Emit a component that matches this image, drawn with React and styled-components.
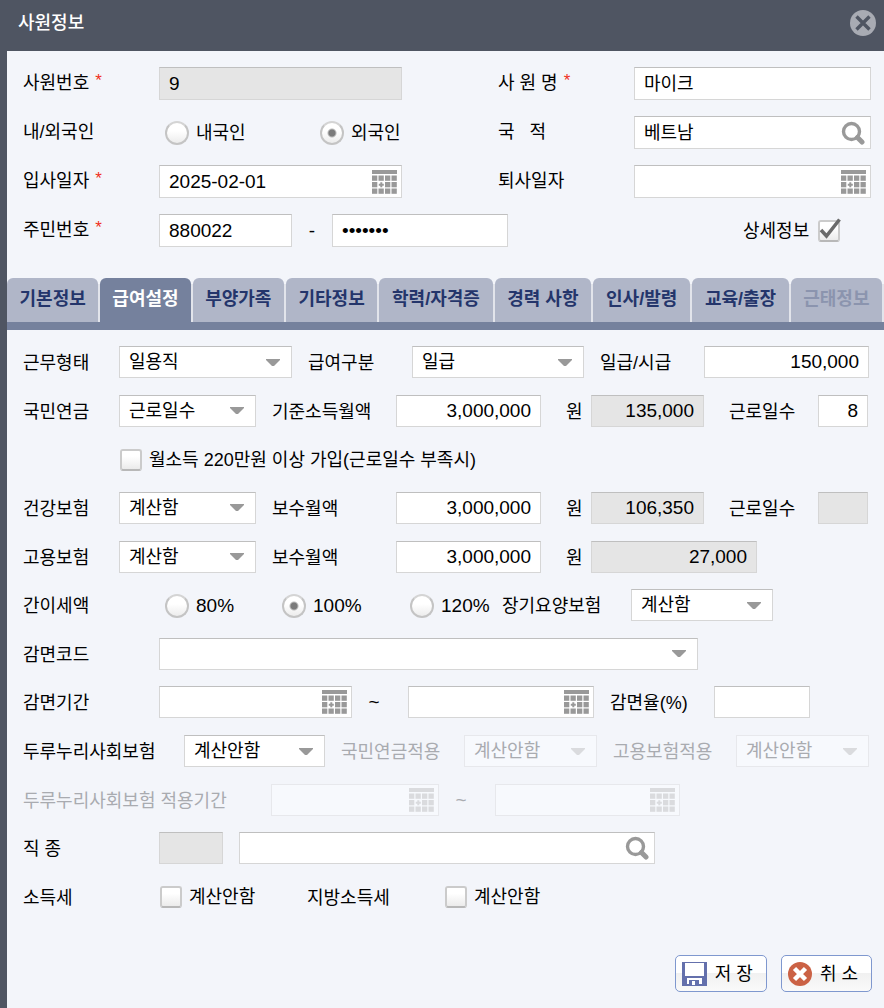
import React from "react";
import styled, { createGlobalStyle, css } from "styled-components";

const GlobalStyle = createGlobalStyle`
  * {
    box-sizing: border-box;
  }

  body {
    margin: 0;
    background: #4f5562;
    color: #000;
    font-family: "Liberation Sans", "Noto Sans CJK KR", sans-serif;
    font-size: 18px;
    line-height: 24px;
  }

  button,
  input,
  select {
    font: inherit;
    color: inherit;
    margin: 0;
  }
`;

const Window = styled.form`
  min-height: 100vh;
  display: flex;
  flex-direction: column;
  background: #4f5562;
`;

const TitleBar = styled.header`
  display: flex;
  justify-content: space-between;
  align-items: center;
  padding: 0 8px 6px 18px;
  height: 51px;
`;

const Title = styled.h1`
  margin: 0;
  color: #fff;
  font-size: 18px;
  font-weight: 500;
`;

const CloseButton = styled.button`
  display: flex;
  padding: 0;
  border: 0;
  background: none;
  cursor: pointer;
`;

const Body = styled.main`
  flex: 1;
  display: flex;
  flex-direction: column;
  margin-left: 7px;
  background: #f3f5fa;
`;

const Summary = styled.section`
  display: grid;
  grid-auto-rows: 33px;
  gap: 16px;
  padding: 16px 13px 31px 16px;
`;

const Panel = styled.section`
  flex: 1;
  display: flex;
  flex-direction: column;
  justify-content: space-between;
  padding: 16px 15px 0 16px;
`;

const Row = styled.div`
  display: grid;
  grid-template-columns: ${(p) => p.$cols};
  align-items: stretch;
  height: ${(p) => (p.$tall ? 33 : 32)}px;
`;

const Label = styled.label`
  display: flex;
  align-items: center;
  padding-left: ${(p) => p.$pad || 0}px;
  white-space: pre;
  color: ${(p) => (p.$off ? "#a9abb0" : "inherit")};

  ${Panel} & {
    padding-top: 2px;
  }

  ${Summary} & {
    padding-bottom: 1px;
  }
`;

const Required = styled.span`
  margin-left: 6px;
  padding-bottom: 4px;
  font-size: 17px;
  color: #f0301c;
`;

const Separator = styled.span`
  display: flex;
  align-items: center;
  justify-content: center;
  padding-right: ${(p) => p.$pad || 0}px;
  font-size: 19px;
  color: ${(p) => (p.$off ? "#a9abb0" : "inherit")};
`;

const box = css`
  width: 100%;
  height: 100%;
  min-width: 0;
  padding: 0 9px;
  border: 1px solid #d6d6d6;
  border-top-color: #bfbfbf;
  border-radius: 0;
  background: #fff;
  outline: none;

  &:disabled {
    background: #f7f9fd;
    border-color: #e7e8ec;
    color: #a9abb0;
    opacity: 1;
  }
`;

const Input = styled.input`
  ${box}
  padding-bottom: ${(p) => (p.$hangul ? 3 : 0)}px;
  font-size: ${(p) => (p.$hangul ? 18 : 19)}px;
  text-align: ${(p) => (p.$right ? "right" : "left")};

  &[readonly] {
    background: #e5e5e5;
  }
`;

const SelectBox = styled.select`
  ${box}
  appearance: none;
`;

const Holder = styled.div`
  position: relative;
`;

const Adornment = styled.span`
  position: absolute;
  top: 0;
  bottom: 0;
  right: ${(p) => p.$right}px;
  display: flex;
  align-items: center;
  pointer-events: none;
  opacity: ${(p) => (p.$off ? 0.3 : 1)};
`;

const IconButton = styled.button`
  display: flex;
  padding: 0;
  border: 0;
  background: none;
  pointer-events: auto;
`;

const Choices = styled.div`
  display: grid;
  grid-template-columns: 155px auto;
  padding-left: 6px;
`;

const Choice = styled.label`
  display: flex;
  align-items: center;
  gap: ${(p) => p.$gap || 7}px;
  padding-left: ${(p) => p.$pad || 0}px;
  font-size: ${(p) => (p.$latin ? 19 : 18)}px;
  white-space: nowrap;

  ${Panel} & {
    padding-top: 1px;
  }
`;

const Radio = styled.input.attrs({ type: "radio" })`
  appearance: none;
  flex: none;
  width: 24px;
  height: 24px;
  border: 2px solid #c4c4c4;
  border-top-color: #d4d4d4;
  border-radius: 50%;
  background: linear-gradient(#fff 40%, #ececec);

  &:checked {
    background: radial-gradient(circle, #7b7b7b 3px, transparent 5px),
      linear-gradient(#fff 40%, #ececec);
  }
`;

const CheckHolder = styled.span`
  position: relative;
  display: flex;
`;

const Check = styled.input.attrs({ type: "checkbox" })`
  appearance: none;
  width: 22px;
  height: 22px;
  border: 2px solid #cbcbcb;
  border-bottom-color: #b8b8b8;
  border-radius: 3px;
  background: linear-gradient(#fff 30%, #ebebeb);

  & + svg {
    position: absolute;
    left: 0;
    bottom: 0;
    pointer-events: none;
    display: none;
  }

  &:checked + svg {
    display: block;
  }
`;

const Tabs = styled.nav`
  display: grid;
  grid-template-columns: 91fr 90fr 91fr 91fr 113fr 96fr 97fr 96fr 91fr;
  gap: 2px;
  padding-right: 2px;
  border-bottom: 8px solid #75819d;
  background: linear-gradient(#f3f5fa 6px, #e2e4eb 6px);
`;

const Tab = styled.button`
  min-width: 0;
  height: 44px;
  padding: 0 0 3px;
  border: 0;
  border-radius: 6px 6px 0 0;
  background: ${(p) => (p.$active ? "#75819d" : "#b0b6c8")};
  color: ${(p) => (p.$active ? "#fff" : "#24356b")};
  font-weight: 700;
  white-space: nowrap;

  &:disabled {
    color: #8b94ae;
  }
`;

const JobName = styled.div`
  display: grid;
  padding-left: 16px;
`;

const Footer = styled.footer`
  display: flex;
  justify-content: flex-end;
  gap: 14px;
  padding: 42px 12px 16px;
`;

const ActionButton = styled.button`
  display: flex;
  align-items: center;
  gap: 8px;
  height: 37px;
  padding: 0 13px 0 6px;
  border: 1px solid #7f98cf;
  border-radius: 5px;
  background: linear-gradient(#fff 50%, #f1f1f1 50%, #fafafa);
`;

const CloseIcon = () => (
  <svg width="26" height="26" viewBox="0 0 26 26" aria-hidden="true">
    <circle cx="13" cy="13" r="13" fill="#a8abb3" />
    <path d="M6.500 6.500l13 13M19.500 6.500l-13 13" stroke="#4f5562" strokeWidth="3.400" />
  </svg>
);

const CalendarIcon = () => (
  <svg width="25" height="24" viewBox="0 0 25 24" fill="#999" aria-hidden="true">
    <rect width="25" height="4" />
    {[5.5, 12, 18.5].map((y) =>
      [0, 6.5, 13, 19.5].map((x) =>
        y === 12 && x === 6.5 ? (
          <path key={x} d="M8.300 12.300h2v1.500h1.500v2h-1.500v1.500h-2v-1.500h-1.500v-2h1.500z" />
        ) : (
          <rect key={`${x}-${y}`} x={x} y={y} width="5.300" height="5.300" />
        )
      )
    )}
  </svg>
);

const SearchIcon = () => (
  <svg width="24" height="24" viewBox="0 0 24 24" fill="none" aria-hidden="true">
    <circle cx="10.500" cy="10.500" r="8" stroke="#999" strokeWidth="3.400" />
    <path d="M16.500 16.500l4.500 4.500" stroke="#999" strokeWidth="5" strokeLinecap="round" />
  </svg>
);

const ArrowIcon = () => (
  <svg width="14" height="7" viewBox="0 0 14 7" aria-hidden="true">
    <path d="M0 0h14v1L8 7H6L0 1z" fill="#999" />
  </svg>
);

const TickIcon = () => (
  <svg width="24" height="24" viewBox="0 0 24 24" fill="none" aria-hidden="true">
    <path d="M3 12l5.500 6L21.500 1.500" stroke="#6a6a6a" strokeWidth="3.500" />
  </svg>
);

const SaveIcon = () => (
  <svg width="25" height="24" viewBox="0 0 25 24" aria-hidden="true">
    <path d="M0 0h25v24H0z" fill="#6470ac" />
    <path d="M3 1h19v13H3z" fill="#fff" />
    <path d="M5 16h15v6H5z" fill="#fff" />
    <path d="M7 18h10v4H7z" fill="#6470ac" />
    <path d="M10 19h3v4h-3z" fill="#fff" />
  </svg>
);

const CancelIcon = () => (
  <svg width="24" height="24" viewBox="0 0 24 24" aria-hidden="true">
    <circle cx="12" cy="12" r="12" fill="#cb6245" />
    <path d="M6.500 6.500l11 11M17.500 6.500l-11 11" stroke="#fff" strokeWidth="4.500" />
  </svg>
);

const Select = ({ options, ...props }) => (
  <Holder>
    <SelectBox {...props}>
      {options.map((o) => (
        <option key={o}>{o}</option>
      ))}
    </SelectBox>
    <Adornment $right={12} $off={props.disabled}>
      <ArrowIcon />
    </Adornment>
  </Holder>
);

const DateInput = (props) => (
  <Holder>
    <Input {...props} />
    <Adornment $right={5} $off={props.disabled}>
      <IconButton type="button" aria-label="달력" disabled={props.disabled}>
        <CalendarIcon />
      </IconButton>
    </Adornment>
  </Holder>
);

const SearchInput = (props) => (
  <Holder>
    <Input {...props} />
    <Adornment $right={6}>
      <IconButton type="button" aria-label="검색">
        <SearchIcon />
      </IconButton>
    </Adornment>
  </Holder>
);

const CheckBox = (props) => (
  <CheckHolder>
    <Check {...props} />
    <TickIcon />
  </CheckHolder>
);

const tabs = [
  "기본정보",
  "급여설정",
  "부양가족",
  "기타정보",
  "학력/자격증",
  "경력 사항",
  "인사/발령",
  "교육/출장",
  "근태정보",
];

const summaryCols = "136px 243fr 232px 237fr";
const insuranceCols = "96px 137fr 140px 145fr 50px 113fr 114px 50fr 1px";

const calc = ["계산함", "계산안함"];
const noCalc = ["계산안함", "계산함"];

export default function App() {
  return (
    <>
      <GlobalStyle />
      <Window onSubmit={(e) => e.preventDefault()}>
        <TitleBar>
          <Title>사원정보</Title>
          <CloseButton type="button" aria-label="닫기">
            <CloseIcon />
          </CloseButton>
        </TitleBar>

        <Body>
          <Summary>
            <Row $tall $cols={summaryCols}>
              <Label htmlFor="empNo">
                사원번호<Required>*</Required>
              </Label>
              <Input id="empNo" defaultValue="9" readOnly />
              <Label htmlFor="empName" $pad={96}>
                사 원 명<Required>*</Required>
              </Label>
              <Input id="empName" $hangul defaultValue="마이크" />
            </Row>
            <Row $tall $cols={summaryCols}>
              <Label as="span">내/외국인</Label>
              <Choices>
                <Choice>
                  <Radio name="origin" />
                  내국인
                </Choice>
                <Choice>
                  <Radio name="origin" defaultChecked />
                  외국인
                </Choice>
              </Choices>
              <Label htmlFor="nation" $pad={96}>
                {"국   적"}
              </Label>
              <SearchInput id="nation" $hangul defaultValue="베트남" />
            </Row>
            <Row $tall $cols={summaryCols}>
              <Label htmlFor="joined">
                입사일자<Required>*</Required>
              </Label>
              <DateInput id="joined" defaultValue="2025-02-01" />
              <Label htmlFor="left" $pad={96}>
                퇴사일자
              </Label>
              <DateInput id="left" />
            </Row>
            <Row $tall $cols="136px 133fr 40px 176fr 363px">
              <Label htmlFor="rrn1">
                주민번호<Required>*</Required>
              </Label>
              <Input id="rrn1" defaultValue="880022" />
              <Separator>-</Separator>
              <Input id="rrn2" type="password" aria-label="주민번호 뒷자리" defaultValue="1234567" />
              <Choice $pad={235} $gap={9}>
                상세정보
                <CheckBox defaultChecked />
              </Choice>
            </Row>
          </Summary>

          <Tabs>
            {tabs.map((name, i) => (
              <Tab key={name} type="button" $active={i === 1} disabled={i === 8}>
                {name}
              </Tab>
            ))}
          </Tabs>

          <Panel>
            <Row $cols="96px 173fr 120px 172fr 120px 165fr">
              <Label htmlFor="workType">근무형태</Label>
              <Select id="workType" options={["일용직", "상용직"]} />
              <Label htmlFor="payType" $pad={16}>
                급여구분
              </Label>
              <Select id="payType" options={["일급", "시급"]} />
              <Label htmlFor="wage" $pad={16}>
                일급/시급
              </Label>
              <Input id="wage" $right defaultValue="150,000" />
            </Row>
            <Row $cols={insuranceCols}>
              <Label htmlFor="pension">국민연금</Label>
              <Select id="pension" options={["근로일수", "계산안함"]} />
              <Label htmlFor="pensionBase" $pad={16}>
                기준소득월액
              </Label>
              <Input id="pensionBase" $right defaultValue="3,000,000" />
              <Label htmlFor="pensionFee" $pad={25}>
                원
              </Label>
              <Input id="pensionFee" $right readOnly defaultValue="135,000" />
              <Label htmlFor="pensionDays" $pad={25}>
                근로일수
              </Label>
              <Input id="pensionDays" $right defaultValue="8" />
            </Row>
            <Row $cols="1fr">
              <Choice $pad={97}>
                <CheckBox />
                월소득 220만원 이상 가입(근로일수 부족시)
              </Choice>
            </Row>
            <Row $cols={insuranceCols}>
              <Label htmlFor="health">건강보험</Label>
              <Select id="health" options={calc} />
              <Label htmlFor="healthBase" $pad={16}>
                보수월액
              </Label>
              <Input id="healthBase" $right defaultValue="3,000,000" />
              <Label htmlFor="healthFee" $pad={25}>
                원
              </Label>
              <Input id="healthFee" $right readOnly defaultValue="106,350" />
              <Label htmlFor="healthDays" $pad={25}>
                근로일수
              </Label>
              <Input id="healthDays" $right readOnly />
            </Row>
            <Row $cols="96px 137fr 140px 145fr 50px 166fr 112px">
              <Label htmlFor="employ">고용보험</Label>
              <Select id="employ" options={calc} />
              <Label htmlFor="employBase" $pad={16}>
                보수월액
              </Label>
              <Input id="employBase" $right defaultValue="3,000,000" />
              <Label htmlFor="employFee" $pad={25}>
                원
              </Label>
              <Input id="employFee" $right readOnly defaultValue="27,000" />
            </Row>
            <Row $cols="142px 117fr 128fr 92fr 129px 142fr 96px">
              <Label as="span">간이세액</Label>
              <Choice $latin>
                <Radio name="taxRate" />
                80%
              </Choice>
              <Choice $latin>
                <Radio name="taxRate" defaultChecked />
                100%
              </Choice>
              <Choice $latin>
                <Radio name="taxRate" />
                120%
              </Choice>
              <Label htmlFor="care">장기요양보험</Label>
              <Select id="care" options={calc} />
            </Row>
            <Row $cols="136px 539fr 171px">
              <Label htmlFor="cutCode">감면코드</Label>
              <Select id="cutCode" options={[""]} />
            </Row>
            <Row $cols="136px 193fr 56px 186fr 120px 96fr 59px">
              <Label htmlFor="cutFrom">감면기간</Label>
              <DateInput id="cutFrom" />
              <Separator $pad={12}>~</Separator>
              <DateInput id="cutTo" aria-label="감면기간 종료" />
              <Label htmlFor="cutRate" $pad={16}>
                감면율(%)
              </Label>
              <Input id="cutRate" $right />
            </Row>
            <Row $cols="161px 141fr 139px 133fr 139px 133fr">
              <Label htmlFor="duru">두루누리사회보험</Label>
              <Select id="duru" options={noCalc} />
              <Label htmlFor="duruPension" $pad={16} $off>
                국민연금적용
              </Label>
              <Select id="duruPension" options={noCalc} disabled />
              <Label htmlFor="duruEmploy" $pad={16} $off>
                고용보험적용
              </Label>
              <Select id="duruEmploy" options={noCalc} disabled />
            </Row>
            <Row $cols="248px 168fr 56px 185fr 189px">
              <Label htmlFor="duruFrom" $off>
                두루누리사회보험 적용기간
              </Label>
              <DateInput id="duruFrom" disabled />
              <Separator $pad={12} $off>
                ~
              </Separator>
              <DateInput id="duruTo" aria-label="적용기간 종료" disabled />
            </Row>
            <Row $cols="136px 64px 432fr 214px">
              <Label htmlFor="job">직 종</Label>
              <Input id="job" readOnly />
              <JobName>
                <SearchInput aria-label="직종명" />
              </JobName>
            </Row>
            <Row $cols="137px 147px 138px 1fr">
              <Label as="span">소득세</Label>
              <Choice>
                <CheckBox />
                계산안함
              </Choice>
              <Label as="span">지방소득세</Label>
              <Choice>
                <CheckBox />
                계산안함
              </Choice>
            </Row>
          </Panel>

          <Footer>
            <ActionButton type="submit">
              <SaveIcon />저 장
            </ActionButton>
            <ActionButton type="button">
              <CancelIcon />취 소
            </ActionButton>
          </Footer>
        </Body>
      </Window>
    </>
  );
}
